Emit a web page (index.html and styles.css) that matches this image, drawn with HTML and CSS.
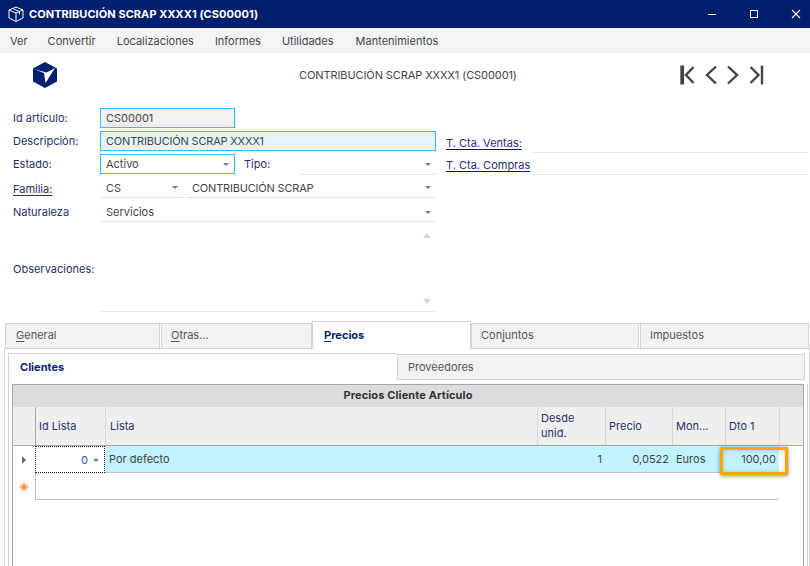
FILE: index.html
```html
<!DOCTYPE html>
<html lang="es">
<head>
<meta charset="utf-8">
<title>Contribución Scrap</title>
<link rel="stylesheet" href="styles.css">
</head>
<body>
<div class="window">
  <header class="titlebar">
    <svg class="title-icon" width="18" height="18" viewBox="0 0 18 18" fill="none" stroke="#fff" stroke-width="1">
      <path d="M9 2 16 5v8l-7 3.500-7-3.500V5z"/><path d="M2 5l7 3 7-3M9 8v8.500M5.500 3.500l7 3v3"/>
    </svg>
    <span class="title-text">CONTRIBUCIÓN SCRAP XXXX1 (CS00001)</span>
    <div class="win-controls">
      <svg width="10" height="10" viewBox="0 0 10 10"><path d="M1 5.500h8" stroke="#fff" stroke-width="1"/></svg>
      <svg width="10" height="10" viewBox="0 0 10 10"><rect x="1.500" y="1.500" width="7" height="7" fill="none" stroke="#fff" stroke-width="1"/></svg>
      <svg width="10" height="10" viewBox="0 0 10 10"><path d="M1 1l8 8M9 1 1 9" stroke="#fff" stroke-width="1.100"/></svg>
    </div>
  </header>
  <nav class="menubar">
    <span class="menu-first">Ver</span><span>Convertir</span><span>Localizaciones</span><span>Informes</span><span>Utilidades</span><span class="menu-last">Mantenimientos</span>
  </nav>
  <section class="head">
    <svg class="logo" width="24" height="26" viewBox="0 0 24 26">
      <path d="M12 0 24 6.500v13L12 26 0 19.500v-13z" fill="#04216e"/>
      <path d="M1 7 11 11 12.500 21 22 6 13.500 10.500z" fill="#fff"/>
    </svg>
    <div class="head-title">CONTRIBUCIÓN SCRAP XXXX1 (CS00001)</div>
    <div class="nav-arrows">
      <svg width="15" height="20" viewBox="0 0 15 20" fill="none" stroke="#444" stroke-width="2.400"><path d="M2.200 0.500v19" stroke-width="3.800"/><path d="M13.500 2 6 10l7.500 8"/></svg>
      <svg width="13" height="20" viewBox="0 0 13 20" fill="none" stroke="#444" stroke-width="2.400"><path d="M12 1.500 3 10l9 8.500"/></svg>
      <svg width="14" height="20" viewBox="0 0 14 20" fill="none" stroke="#444" stroke-width="2.400"><path d="M2 1.500 11 10l-9 8.500"/></svg>
      <svg width="15" height="20" viewBox="0 0 15 20" fill="none" stroke="#444" stroke-width="2.400"><path d="M1.500 2l8 8-8 8"/><path d="M13 0.500v19" stroke-width="2.400"/></svg>
    </div>
  </section>
  <section class="form">
    <div class="form-left">
      <div class="row row-id">
        <label class="lbl">Id artículo:</label>
        <div class="box box-id">CS00001</div>
      </div>
      <div class="row row-desc">
        <label class="lbl">Descripción:</label>
        <div class="box box-desc caps">CONTRIBUCIÓN SCRAP XXXX1</div>
      </div>
      <div class="row row-estado">
        <label class="lbl">Estado:</label>
        <div class="box box-estado">Activo<i class="caret"></i></div>
        <label class="lbl lbl-tipo">Tipo:</label>
        <div class="line line-tipo"><i class="caret"></i></div>
      </div>
      <div class="row row-fam">
        <label class="lbl lbl-link">Familia:</label>
        <div class="line line-cs">CS<i class="caret"></i></div>
        <div class="line line-fam caps">CONTRIBUCIÓN SCRAP<i class="caret"></i></div>
      </div>
      <div class="row row-nat">
        <label class="lbl">Naturaleza</label>
        <div class="line line-nat">Servicios<i class="caret"></i></div>
      </div>
      <div class="row row-obs">
        <label class="lbl lbl-obs">Observaciones:</label>
        <div class="memo"><i class="sc-up"></i><i class="sc-down"></i></div>
      </div>
    </div>
    <div class="form-right">
      <div class="acc"><span class="acc-lbl">T. Cta. Ventas:</span><span class="acc-line"></span></div>
      <div class="acc"><span class="acc-lbl">T. Cta. Compras</span><span class="acc-line"></span></div>
    </div>
  </section>
  <div class="tabs">
    <div class="tab tab-gen"><u>G</u>eneral</div>
    <div class="tab tab-otr"><u>O</u>tras...</div>
    <div class="tab tab-pre"><u>P</u>recios</div>
    <div class="tab tab-con">Con<u>j</u>untos</div>
    <div class="tab tab-imp">Impuestos</div>
  </div>
  <div class="panel">
    <div class="inner">
      <div class="subtabs">
        <div class="subtab-on">Clientes</div>
        <div class="subtab-off">Proveedores</div>
      </div>
      <div class="grid-wrap">
        <div class="grid">
          <div class="grid-title">Precios Cliente Artículo</div>
          <div class="cols g-head">
            <div class="c c0"></div>
            <div class="c">Id Lista</div>
            <div class="c">Lista</div>
            <div class="c c-wrap">Desde<br>unid.</div>
            <div class="c">Precio</div>
            <div class="c">Mon...</div>
            <div class="c">Dto 1</div>
            <div class="c"></div>
          </div>
          <div class="cols g-row">
            <div class="c0 rowmark"><i class="tri"></i></div>
            <div class="d d-id">0<i class="caret"></i></div>
            <div class="d">Por defecto</div>
            <div class="d num">1</div>
            <div class="d num">0,0522</div>
            <div class="d">Euros</div>
            <div class="d num">100,00</div>
            <div class="d-end"></div>
            <div class="hl"></div>
          </div>
          <div class="cols g-new">
            <div class="c0 rowmark star">
              <svg width="10" height="10" viewBox="0 0 10 10" stroke="#f59a3c" stroke-width="1"><path d="M5 0v10M0 5h10M1.500 1.500l7 7M8.500 1.500l-7 7"/><circle cx="5" cy="5" r="2.600" fill="#f59a3c" stroke="none"/></svg>
            </div>
            <div class="newcell"></div>
          </div>
        </div>
      </div>
    </div>
  </div>
</div>
</body>
</html>
```
FILE: styles.css
```css
* { box-sizing: border-box; }
html, body { margin: 0; padding: 0; background: #fff; }
body { font-family: Inter, "Noto Sans", sans-serif; font-size: 11px; color: #444; }
i { display: block; font-style: normal; }
.window { width: 810px; height: 566px; overflow: hidden; display: flex; flex-direction: column; }

.titlebar { height: 28px; flex: none; background: #001f6e; color: #fff; display: flex; align-items: center; padding-left: 7px; }
.title-icon { flex: none; margin-right: 4px; }
.title-text { font-size: 11px; font-weight: 700; letter-spacing: 0.005em; }
.win-controls { margin-left: auto; display: flex; gap: 32px; padding-right: 9px; }

.menubar { height: 25px; flex: none; background: #f3f4f6; display: flex; align-items: center; padding-left: 10px; gap: 21px; color: #444; }
.menu-first { margin-right: -1px; }
.menu-last { margin-left: 1px; }

.head { height: 53px; flex: none; display: flex; align-items: flex-start; padding: 0 46px 0 33px; }
.logo { flex: none; margin-top: 9px; }
.head-title { flex: none; margin-left: 242px; margin-top: 15px; font-size: 11px; letter-spacing: -0.09px; color: #444; white-space: nowrap; }
.nav-arrows { margin-left: auto; margin-top: 12px; display: flex; gap: 9px; }

.form { height: 216px; flex: none; display: flex; }
.form-left { width: 446px; flex: none; padding-left: 13px; }
.row { display: flex; position: relative; }
.lbl { width: 87px; flex: none; color: #27306b; }
.caps { letter-spacing: -0.19px; }
.row-id { height: 23px; align-items: center; }
.row-desc { height: 23px; align-items: center; }
.row-estado { height: 24px; align-items: center; }
.row-fam { height: 22px; }
.row-nat { height: 24px; }
.row-obs { height: 90px; }
.box { border: 1px solid #33bdf2; height: 20px; padding-left: 5px; display: flex; align-items: center; position: relative; flex: none; }
.box-id { width: 135px; background: #f2f2f2; }
.box-desc { width: 336px; background: #e4f6fd; }
.box-estado { width: 135px; }
.lbl-tipo { width: 65px; padding-left: 9px; }
.line { border-bottom: 1px solid #e2e2e2; height: 22px; padding: 5px 0 0 6px; position: relative; flex: none; }
.line-tipo { width: 136px; height: 22px; }
.line-cs { width: 83px; }
.line-fam { width: 250px; margin-left: 3px; }
.line-nat { width: 336px; height: 24px; padding-top: 7px; }
.line-nat .caret { margin-top: 1px; }
.lbl-link { align-self: flex-start; margin-top: 6px; height: 14px; text-decoration: underline; text-underline-offset: 2px; }
.row-nat .lbl { margin-top: 7px; }
.caret { position: absolute; right: 5px; top: 50%; margin-top: -1px; width: 0; height: 0; border-left: 3.500px solid transparent; border-right: 3.500px solid transparent; border-top: 3.500px solid #777; }
.memo { width: 336px; height: 90px; border-bottom: 1px solid #e2e2e2; position: relative; flex: none; }
.lbl-obs { padding-top: 40px; white-space: nowrap; }
.sc-up { position: absolute; right: 5px; top: 11px; border-left: 4px solid transparent; border-right: 4px solid transparent; border-bottom: 5px solid #d4d4d4; }
.sc-down { position: absolute; right: 5px; bottom: 7px; border-left: 4px solid transparent; border-right: 4px solid transparent; border-top: 5px solid #d4d4d4; }

.form-right { flex: 1; padding-top: 25px; }
.acc { display: flex; height: 22px; align-items: flex-end; }
.acc-lbl { width: 87px; flex: none; color: #27306b; line-height: 14px; height: 15px; margin-bottom: 2px; white-space: nowrap; text-decoration: underline; text-decoration-color: #0a1f6e; text-underline-offset: 2px; }
.acc-line { width: 275px; border-bottom: 1px solid #e2e2e2; height: 1px; }

.tabs { height: 27px; flex: none; display: flex; padding-left: 5px; align-items: flex-end; position: relative; z-index: 2; }
.tab { height: 26px; background: #f2f2f2; border: 1px solid #d4d4d4; padding: 0 0 2px 9px; display: flex; align-items: center; white-space: pre; color: #555; flex: none; }
.tab u { text-underline-offset: 2px; }
.tab-gen { width: 155px; padding-left: 10px; }
.tab-otr { width: 151px; margin-left: 1px; }
.tab-pre { width: 159px; height: 28px; background: #fff; border-bottom: 0; font-weight: 700; color: #0a2472; padding-left: 11px; }
.tab-con { width: 168px; }
.tab-imp { width: 169px; margin-left: 1px; }

.panel { flex: 1; margin-left: 4px; margin-top: -1px; border: 1px solid #d4d4d4; border-bottom: 0; padding: 4px 0 0 3px; position: relative; z-index: 1; }
.inner { height: 100%; width: 800px; display: flex; flex-direction: column; }
.subtabs { height: 31px; flex: none; display: flex; }
.subtab-on { width: 389px; padding: 6px 0 0 11px; font-weight: 700; color: #0a2472; border-left: 1px solid #d4d4d4; border-top: 1px solid #d4d4d4; background: #fff; }
.subtab-off { width: 408px; margin-top: 1px; height: 26px; background: #f2f2f2; border: 1px solid #d4d4d4; padding: 5px 0 0 10px; color: #555; }
.grid-wrap { flex: 1; border-left: 1px solid #d4d4d4; border-right: 1px solid #d4d4d4; padding-left: 3px; }
.grid { width: 792px; height: 200px; border: 1px solid #a8a8a8; border-bottom: 0; }
.grid-title { height: 22px; background: #dcdcdc; text-align: center; font-weight: 700; letter-spacing: 0.01em; color: #333; line-height: 21px; }
.cols { display: grid; grid-template-columns: 22px 70px 432px 68px 67px 53px 54px 1fr; }
.g-head { height: 39px; background: #efefef; border-bottom: 1px solid #a8a8a8; color: #27306b; }
.c { border-left: 1px solid #d6d6d6; padding-left: 4px; display: flex; align-items: center; line-height: 15px; }
.c0 { border-left: 0; }
.g-head .c:nth-child(2) { border-left: 1px solid #a8a8a8; padding-left: 3px; }
.g-head .c:nth-child(4) { padding-left: 3px; }
.g-head .c:nth-child(5) { padding-left: 3px; }
.g-head .c:nth-child(6) { padding-left: 3px; }
.g-head .c:nth-child(7) { padding-left: 3px; }
.g-row { height: 27px; position: relative; background: #fff; }
.rowmark { display: flex; align-items: center; justify-content: center; }
.tri { width: 0; height: 0; border-top: 4px solid transparent; border-bottom: 4px solid transparent; border-left: 4px solid #666; }
.d { background: #c0f3fe; border-bottom: 1px solid #c4c4c4; padding: 0 3px 0 4px; display: flex; align-items: center; white-space: nowrap; }
.num { justify-content: flex-end; }
.d-id { background: #fff; border: 1px dotted #111; justify-content: flex-end; padding-right: 16px; position: relative; color: #2f5e9c; }
.d-end { background: #fff; }
.hl { position: absolute; left: 707px; top: 1px; width: 68px; height: 28px; border: 3px solid #f5a800; box-shadow: 0 1px 4px rgba(0,0,0,0.45), inset 0 0 4px rgba(0,0,0,0.2); pointer-events: none; }
.g-new { height: 27px; }
.newcell { grid-column: 2 / 8; border-left: 1px solid #c4c4c4; border-bottom: 1px solid #c4c4c4; }
```
